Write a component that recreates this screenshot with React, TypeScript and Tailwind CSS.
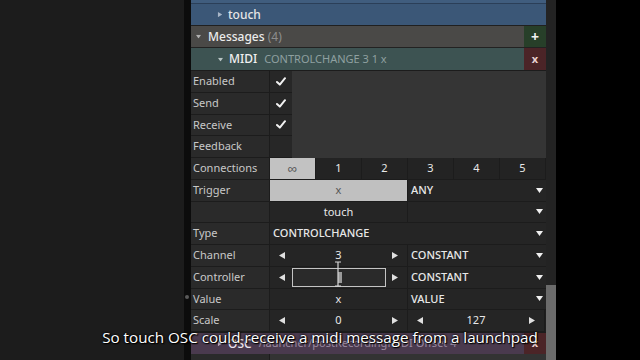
import React from "react";

const Tri = ({ dir, className = "" }: { dir: "r" | "l" | "d"; className?: string }) => {
  const pts = dir === "r" ? "0,0 6,3.5 0,7" : dir === "l" ? "6,0 0,3.5 6,7" : "0,0 7,0 3.5,5";
  return (
    <svg width={dir === "d" ? 7 : 6} height={dir === "d" ? 5 : 7} viewBox={dir === "d" ? "0 0 7 5" : "0 0 6 7"} className={className}>
      <polygon points={pts} fill="currentColor" />
    </svg>
  );
};

const Check = () => (
  <svg width="10" height="9" viewBox="0 0 10 9">
    <path d="M1 5 L3.8 7.6 L9 1.2" stroke="#f2f2f2" strokeWidth="2" fill="none" strokeLinecap="round" strokeLinejoin="round" />
  </svg>
);

const Label = ({ children }: { children?: React.ReactNode }) => (
  <div className="w-[79px] h-full shrink-0 bg-[#2a2a2a] border-b border-r border-[#1c1c1c] flex items-center pl-[2px] text-[11px] text-[#c8c8c8]">
    {children}
  </div>
);

const Dropdown = ({ text }: { text?: string }) => (
  <div className="w-[138px] h-full bg-[#252525] border-b border-[#1c1c1c] flex items-center justify-between pl-[3px] pr-[3px] text-[11px] text-[#e8e8e8] font-medium">
    <span>{text}</span>
    <Tri dir="d" className="text-[#f0f0f0]" />
  </div>
);

const Stepper = ({ value, w = "w-[138px]", edit = false }: { value: string; w?: string; edit?: boolean }) => (
  <div className={`${w} h-full bg-[#252525] border-b border-r border-[#1c1c1c] flex items-center justify-between px-[9px] text-[11px] text-[#e8e8e8]`}>
    <Tri dir="l" className="text-[#e0e0e0]" />
    {edit ? (
      <div className="w-[94px] h-[19px] border border-[#c4c4c4] bg-[#2a2a2a] flex items-center justify-center">
        <span className="w-[4px] h-[11px] bg-[#9a9a9a] ml-[2px]" />
      </div>
    ) : (
      <span>{value}</span>
    )}
    <Tri dir="r" className="text-[#e0e0e0]" />
  </div>
);

const rowH = "h-[21.75px]";

export default function App() {
  return (
    <div className="w-[640px] h-[360px] flex bg-black relative overflow-hidden font-['Noto_Sans',sans-serif]">
      <div className="w-[184px] h-full bg-[#1c1c1c]" />
      <div className="w-[7px] h-full bg-[#0c0c0c] relative">
        <div className="absolute left-[1px] top-[295px] w-[4px] h-[4px] rounded-full bg-[#5a5a5a]" />
      </div>
      <div className="w-[355px] h-full flex flex-col bg-[#1f1f1f]">
        {/* touch row */}
        <div className="h-[3px] bg-[#405d7e]" />
        <div className="h-px bg-[#2b3f58]" />
        <div className="h-[21px] bg-[#3b5777] flex items-center pl-[26px] gap-[5px] text-[12px] text-[#e6e6e6] font-medium">
          <Tri dir="r" className="text-[#a8b6c8] scale-75" />
          <span>touch</span>
        </div>
        <div className="h-px bg-[#202020]" />
        {/* Messages row */}
        <div className="h-[21px] flex">
          <div className="flex-1 bg-[#4a4947] flex items-center pl-[4px] gap-[6px] text-[12px] font-medium text-[#ececec]">
            <Tri dir="d" className="text-[#b0b0b0] scale-75" />
            <span>
              Messages <span className="text-[#8d8d8d] font-normal">(4)</span>
            </span>
          </div>
          <div className="w-[22px] bg-[#273f29] flex items-center justify-center text-[#f2f2f2] text-[14px] font-bold">+</div>
        </div>
        <div className="h-px bg-[#222]" />
        {/* MIDI row */}
        <div className="h-[22px] flex">
          <div className="flex-1 bg-[#3d5352] flex items-center pl-[26px] gap-[5px] text-[12px]">
            <Tri dir="d" className="text-[#b8c4c4] scale-75" />
            <span className="text-[#f0f0f0] font-medium">MIDI</span>
            <span className="text-[#8fa0a0] text-[11px] ml-[2px]">CONTROLCHANGE 3 1 x</span>
          </div>
          <div className="w-[22px] bg-[#4b2427] flex items-center justify-center text-[#e8d0d0] text-[11px] font-bold">x</div>
        </div>
        <div className="h-px bg-[#1c1c1c]" />
        {/* check rows block */}
        <div className="flex">
          <div className="flex flex-col">
            {[
              ["Enabled", true],
              ["Send", true],
              ["Receive", true],
              ["Feedback", false],
            ].map(([l, c]) => (
              <div key={l as string} className={`${rowH} flex`}>
                <Label>{l as string}</Label>
                <div className="w-[22px] h-full bg-[#272727] border-b border-[#1c1c1c] flex items-center justify-center">
                  {c ? <Check /> : null}
                </div>
              </div>
            ))}
          </div>
          <div className="flex-1 bg-[#353535]" />
        </div>
        {/* Connections */}
        <div className={`${rowH} flex`}>
          <Label>Connections</Label>
          {["∞", "1", "2", "3", "4", "5"].map((c, i) => (
            <div
              key={c}
              className={`flex-1 h-full border-b border-r border-[#1c1c1c] flex items-center justify-center text-[11px] ${
                i === 0 ? "bg-[#c2c2c2] text-[#555] text-[13px]" : "bg-[#232323] text-[#e8e8e8]"
              }`}
            >
              {c}
            </div>
          ))}
        </div>
        {/* Trigger */}
        <div className={`${rowH} flex`}>
          <Label>Trigger</Label>
          <div className="w-[138px] h-full bg-[#c0c0c0] border-b border-r border-[#1c1c1c] flex items-center justify-center text-[11px] text-[#555]">x</div>
          <Dropdown text="ANY" />
        </div>
        {/* touch */}
        <div className={`${rowH} flex`}>
          <Label />
          <div className="w-[138px] h-full bg-[#252525] border-b border-r border-[#1c1c1c] flex items-center justify-center text-[11px] text-[#e8e8e8]">touch</div>
          <Dropdown />
        </div>
        {/* Type */}
        <div className={`${rowH} flex`}>
          <Label>Type</Label>
          <div className="flex-1 h-full bg-[#252525] border-b border-[#1c1c1c] flex items-center justify-between pl-[3px] pr-[3px] text-[11px] text-[#e8e8e8] font-medium">
            <span>CONTROLCHANGE</span>
            <Tri dir="d" className="text-[#f0f0f0]" />
          </div>
        </div>
        {/* Channel */}
        <div className={`${rowH} flex`}>
          <Label>Channel</Label>
          <Stepper value="3" />
          <Dropdown text="CONSTANT" />
        </div>
        {/* Controller */}
        <div className={`${rowH} flex relative`}>
          <Label>Controller</Label>
          <Stepper value="" edit />
          <Dropdown text="CONSTANT" />
          <svg className="absolute left-[143px] top-[-6px]" width="8" height="26" viewBox="0 0 8 26">
            <path d="M1 1 H7 M4 1 V25 M1 25 H7" stroke="#d8d8d8" strokeWidth="1.2" fill="none" />
          </svg>
        </div>
        {/* Value */}
        <div className={`${rowH} flex`}>
          <Label>Value</Label>
          <div className="w-[138px] h-full bg-[#252525] border-b border-r border-[#1c1c1c] flex items-center justify-center text-[11px] text-[#e8e8e8]">x</div>
          <Dropdown text="VALUE" />
        </div>
        {/* Scale */}
        <div className={`${rowH} flex`}>
          <Label>Scale</Label>
          <Stepper value="0" />
          <Stepper value="127" w="w-[137px]" />
        </div>
        <div className="h-[1px] bg-[#1c1c1c]" />
        {/* OSC row */}
        <div className="h-[21px] flex">
          <div className="flex-1 bg-[#4a3a4e] flex items-center pl-[26px] gap-[5px] text-[12px]">
            <Tri dir="r" className="text-[#b8a8bc] scale-75" />
            <span className="text-[#ece4ee] font-medium">OSC</span>
            <span className="text-[#9a8aa0] text-[11px] ml-[2px]">/launcher/postRecordingMIDI Offset 4</span>
          </div>
          <div className="w-[22px] bg-[#4b2427] flex items-center justify-center text-[#e8d0d0] text-[11px] font-bold">x</div>
        </div>
        <div className="flex-1 flex">
          <div className="w-[79px] bg-[#2a2a2a] border-r border-[#1c1c1c]" />
          <div className="flex-1 bg-[#333]" />
        </div>
      </div>
      <div className="w-[10px] h-full bg-[#232323] flex flex-col">
        <div className="h-[285px]" />
        <div className="flex-1 bg-[#6b6b6b]" />
      </div>
      <div className="flex-1 bg-black" />
      <div className="absolute left-0 right-0 top-[326px] text-center text-[15.2px] text-white font-['Open_Sans',sans-serif] [text-shadow:0_0_2px_#000,0_0_2px_#000,1px_1px_1px_#000]">
        So touch OSC could receive a midi message from a launchpad
      </div>
    </div>
  );
}
